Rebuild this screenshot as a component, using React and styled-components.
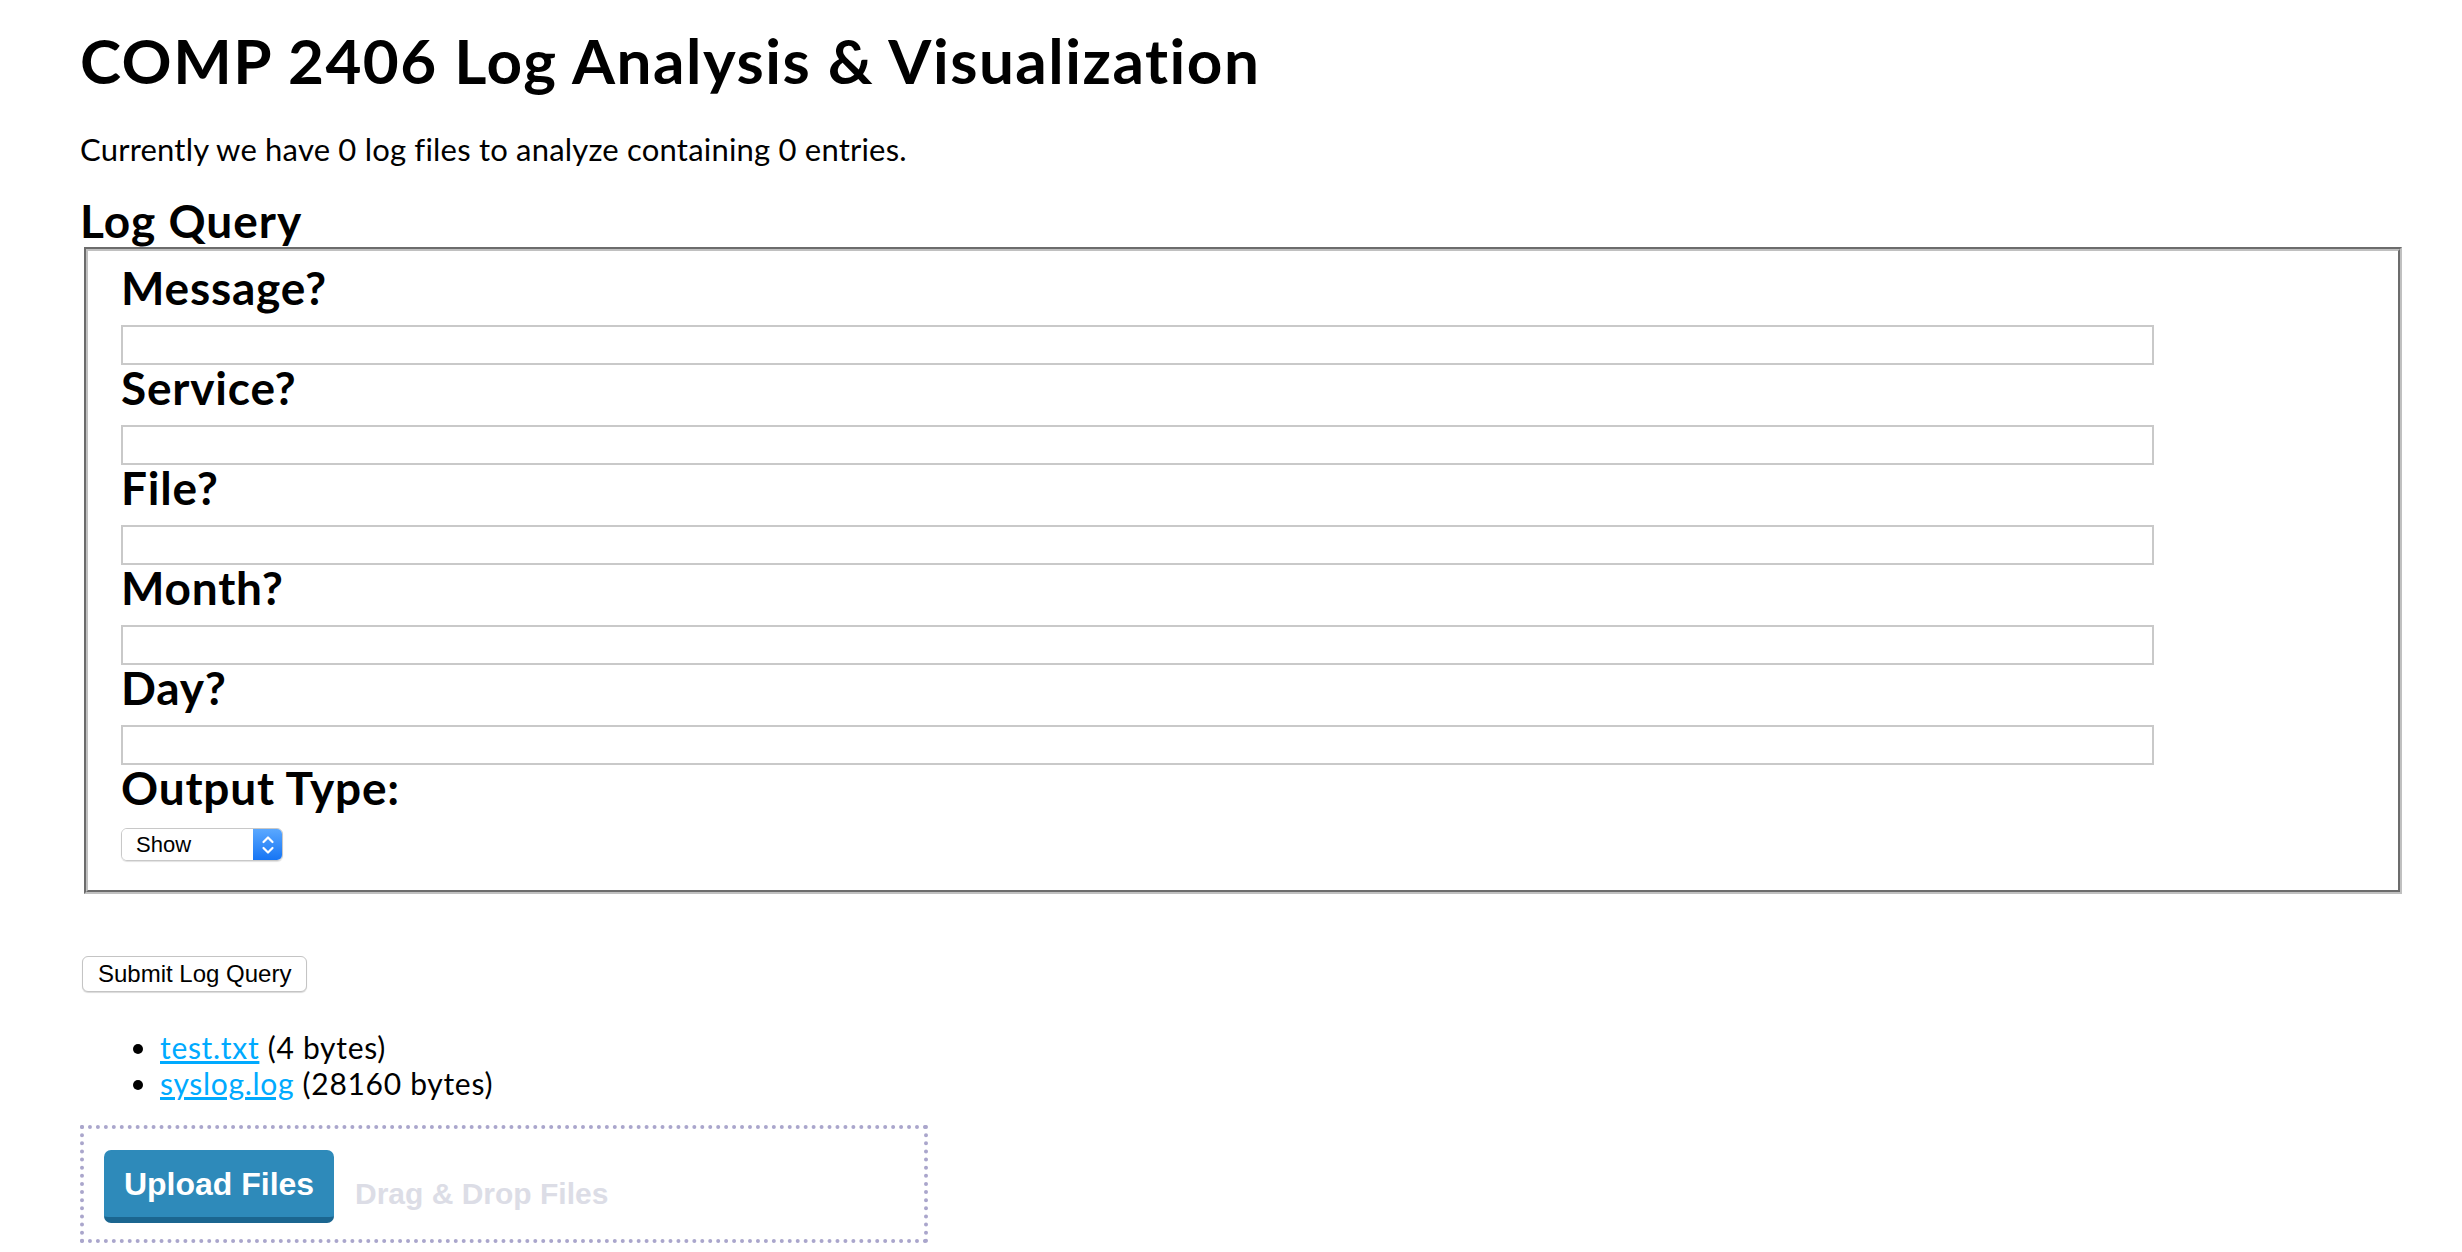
import React from 'react'
import styled, { createGlobalStyle } from 'styled-components'

const GlobalStyle = createGlobalStyle`
  html, body {
    margin: 0;
    padding: 0;
    background: #ffffff;
  }
  body {
    font-family: Lato, "Open Sans", sans-serif;
    color: #000000;
    font-variant-ligatures: no-common-ligatures;
  }
`;

const Page = styled.div`
    padding: 0 60px 0 80px;
`;

const Title = styled.h1`
    margin: 16px 0 0;
    font-family: Lato, sans-serif;
    font-weight: 700;
    font-size: 62px;
    line-height: 88px;
    letter-spacing: 1.5px;
`;

const Summary = styled.p`
    margin: 25px 0 0;
    font-family: Lato, sans-serif;
    font-weight: 400;
    font-size: 31px;
    line-height: 40px;
    letter-spacing: 0.2px;
`;

const SectionTitle = styled.h2`
    margin: 26px 0 0;
    font-family: Lato, sans-serif;
    font-weight: 700;
    font-size: 46px;
    line-height: 52px;
    letter-spacing: 1px;
`;

const QueryBox = styled.fieldset`
    margin: 0 0 0 4px;
    padding: 14px 33px 29px;
    border: 4px groove #c0c0c0;
    min-width: 0;
`;

const FieldLabel = styled.label`
    display: block;
    font-family: Lato, sans-serif;
    font-weight: 700;
    font-size: 46px;
    line-height: 46px;
    padding-bottom: 14px;
    letter-spacing: 0.8px;
`;

const TextInput = styled.input`
    display: block;
    box-sizing: border-box;
    width: 2033px;
    height: 40px;
    margin: 0;
    padding: 0 6px;
    border: 2px solid #c9c9c9;
    background: #ffffff;
    font-size: 24px;
    outline: none;
`;

const SelectWrap = styled.div`
    display: inline-flex;
    margin-top: 3px;
    height: 33px;
    box-sizing: border-box;
    border: 1px solid #c8c8c8;
    border-radius: 6px;
    overflow: hidden;
    box-shadow: 0 1px 1px rgba(0, 0, 0, 0.12);
`;

const Select = styled.select`
    appearance: none;
    -webkit-appearance: none;
    width: 131px;
    height: 100%;
    margin: 0;
    padding: 0 0 0 14px;
    border: 0;
    background: #ffffff;
    font-family: "Liberation Sans", Arial, sans-serif;
    font-size: 22px;
    color: #000000;
    outline: none;
`;

const Stepper = styled.span`
    display: flex;
    align-items: center;
    justify-content: center;
    width: 29px;
    background: linear-gradient(#5aa8ff, #1675f4);
`;

const SubmitButton = styled.button`
    margin: 62px 0 0 2px;
    height: 36px;
    padding: 0 15px;
    border: 1px solid #c4c4c4;
    border-radius: 6px;
    background: #ffffff;
    box-shadow: 0 1px 1px rgba(0, 0, 0, 0.15);
    font-family: "Liberation Sans", Arial, sans-serif;
    font-size: 24px;
    line-height: 30px;
    color: #000000;
`;

const FileList = styled.ul`
    margin: 37px 0 0;
    padding-left: 80px;
    font-family: Lato, sans-serif;
    font-size: 30px;
    line-height: 36px;
    letter-spacing: 0.7px;
`;

const FileLink = styled.a`
    color: #00aaff;
    text-decoration: underline;
`;

const DropZone = styled.div`
    display: flex;
    align-items: flex-start;
    gap: 21px;
    width: 848px;
    box-sizing: border-box;
    margin-top: 24px;
    padding: 21px 20px 16px;
    border: 4px dotted #aaa6cc;
`;

const UploadButton = styled.button`
    box-sizing: border-box;
    width: 230px;
    height: 73px;
    padding: 14px 0 13px;
    border: 0;
    border-bottom: 6px solid #1b6690;
    border-radius: 7px;
    background: #2e8aba;
    color: #ffffff;
    font-family: "Liberation Sans", Arial, sans-serif;
    font-weight: 700;
    font-size: 32px;
    line-height: 40px;
`;

const DropHint = styled.span`
    margin-top: 26px;
    font-family: "Liberation Sans", Arial, sans-serif;
    font-weight: 700;
    font-size: 30px;
    line-height: 36px;
    color: #dcdde6;
`;

const StepperIcon = () => (
    <svg width="14" height="22" viewBox="0 0 14 22" fill="none">
        <path d="M2.5 8L7 3.5L11.5 8" stroke="#ffffff" strokeWidth="2.2" strokeLinecap="round" strokeLinejoin="round" />
        <path d="M2.5 14L7 18.5L11.5 14" stroke="#ffffff" strokeWidth="2.2" strokeLinecap="round" strokeLinejoin="round" />
    </svg>
);

const fields = ['Message?', 'Service?', 'File?', 'Month?', 'Day?'];

const files = [
    { name: 'test.txt', size: 4 },
    { name: 'syslog.log', size: 28160 },
];

const App = () => {
    return (
        <Page>
            <GlobalStyle />
            <Title>COMP 2406 Log Analysis &amp; Visualization</Title>
            <Summary>Currently we have 0 log files to analyze containing 0 entries.</Summary>
            <SectionTitle>Log Query</SectionTitle>
            <QueryBox>
                {fields.map((f) => (
                    <div key={f}>
                        <FieldLabel>{f}</FieldLabel>
                        <TextInput type="text" />
                    </div>
                ))}
                <FieldLabel>Output Type:</FieldLabel>
                <SelectWrap>
                    <Select defaultValue="show">
                        <option value="show">Show</option>
                        <option value="visualize">Visualize</option>
                    </Select>
                    <Stepper>
                        <StepperIcon />
                    </Stepper>
                </SelectWrap>
            </QueryBox>
            <SubmitButton>Submit Log Query</SubmitButton>
            <FileList>
                {files.map((file) => (
                    <li key={file.name}>
                        <FileLink href="#">{file.name}</FileLink> ({file.size} bytes)
                    </li>
                ))}
            </FileList>
            <DropZone>
                <UploadButton>Upload Files</UploadButton>
                <DropHint>Drag &amp; Drop Files</DropHint>
            </DropZone>
        </Page>
    )
}

export default App;
